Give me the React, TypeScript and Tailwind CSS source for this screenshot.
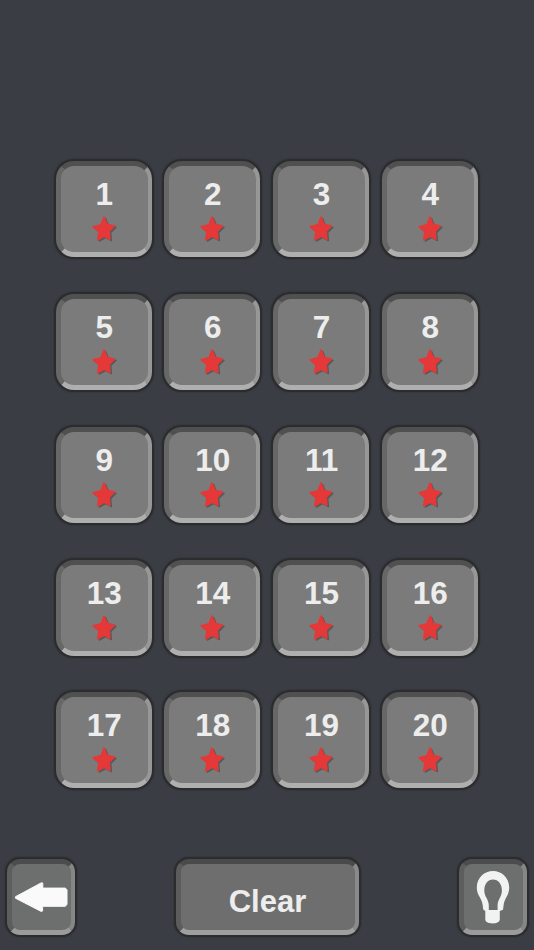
import { ReactNode } from "react";
import clsx from "clsx";

const levels = Array.from({ length: 20 }, (_, i) => i + 1);

const starPath =
    "M14 2.6 16.9 9.9 24.5 11.6 19.2 16.9 19.9 25 14.1 22 7.7 25.5 9 17.2 3.1 12.4 11 10.4Z";

function Star() {
    return (
        <svg viewBox="0 0 28 28" className="mt-[2px] -ml-px w-7 h-7 overflow-visible">
            <path
                d={starPath}
                transform="translate(1.6 1.7)"
                fill="#4b4b4b"
                stroke="#4b4b4b"
                strokeWidth="1.2"
                strokeLinejoin="round"
                opacity="0.7"
            />
            <path
                d={starPath}
                transform="translate(0 0.4)"
                fill="#e53838"
                stroke="#e53838"
                strokeWidth="1.6"
                strokeLinejoin="round"
            />
        </svg>
    );
}

function Arrow() {
    return (
        <svg viewBox="0 0 54 32" className="-ml-[2px] w-[54px] h-8 shrink-0">
            <path
                d="M1.5 15.7 27.5 1.7 28.8 2.1V7.1H51.2L53 8.7V23.2L51.4 25.3H28.6V30L27.3 30.5 1.5 17.2Z"
                fill="#fafafa"
                stroke="#fafafa"
                strokeWidth="1"
                strokeLinejoin="round"
            />
        </svg>
    );
}

function Bulb() {
    return (
        <svg viewBox="0 0 34 54" className="-ml-[2px] w-[34px] h-[54px]">
            <path
                fillRule="evenodd"
                fill="#f2f2f2"
                d="M17 1C25.5 1 33.2 7.5 33.2 17.5C33.2 25.5 28.6 28 27.7 34.5L27 39.8L23.8 41V49C23.8 52 21 53.4 16.5 53.4C12 53.4 9.3 52 9.3 49V41L7.2 39.5L6.6 34.5C5.8 28 .8 25.5 .8 17.5C.8 7.5 8.5 1 17 1ZM17 9.5C11.8 9.5 8.3 14 8.3 20.5C8.3 27 12.4 28.5 12.8 35V40H21.6V35C22 28.5 25.9 27 25.9 20.5C25.9 14 22.2 9.5 17 9.5Z"
            />
        </svg>
    );
}

function Tile({ className, children }: { className?: string; children?: ReactNode }) {
    return (
        <button
            className={clsx(
                "flex items-center border-t-[5px] border-l-[5px] border-r-[4px] border-b-[5px] shadow-[0_0_0_2px_#2b2c2e,0_0_2px_2px_#2b2c2e]",
                className
            )}
        >
            {children}
        </button>
    );
}

export default function App() {
    return (
        <div className="w-[534px] h-[950px] bg-[#3b3d45] flex flex-col font-['Liberation_Sans',Arial,sans-serif] font-bold text-[#ededed]">
            <div className="grid grid-cols-[repeat(4,96px)] gap-x-[12.7px] gap-y-[36.75px] pt-[161.45px] pl-[55.7px]">
                {levels.map((n) => (
                    <Tile
                        key={n}
                        className="h-24 flex-col rounded-[18px] bg-[#7b7b7b] border-t-[#505050] border-l-[#676767] border-r-[#979797] border-b-[#afafaf]"
                    >
                        <span className="mt-[10px] text-[31.5px] leading-9">{n}</span>
                        <Star />
                    </Tile>
                ))}
            </div>
            <div className="mt-auto mb-[15px] flex justify-between pl-[7px] pr-[7px] h-[76px]">
                <Tile className="w-[68px] justify-center rounded-[13px] bg-[#6d6f6e] border-t-[#4b4c4d] border-l-[#5c5d5d] border-r-[#868686] border-b-[#9b9b9b]">
                    <Arrow />
                </Tile>
                <Tile className="w-[183px] justify-center rounded-[13px] bg-[#6e6e6e] border-t-[#4a4a4b] border-l-[#5c5c5c] border-r-[#8a8a8a] border-b-[#9f9f9f]">
                    <span className="mt-[10px] text-[31px] leading-9">Clear</span>
                </Tile>
                <Tile className="w-[68px] justify-center rounded-[13px] bg-[#6d6f6e] border-t-[#4b4c4d] border-l-[#5c5d5d] border-r-[#868686] border-b-[#9b9b9b]">
                    <Bulb />
                </Tile>
            </div>
        </div>
    );
}
